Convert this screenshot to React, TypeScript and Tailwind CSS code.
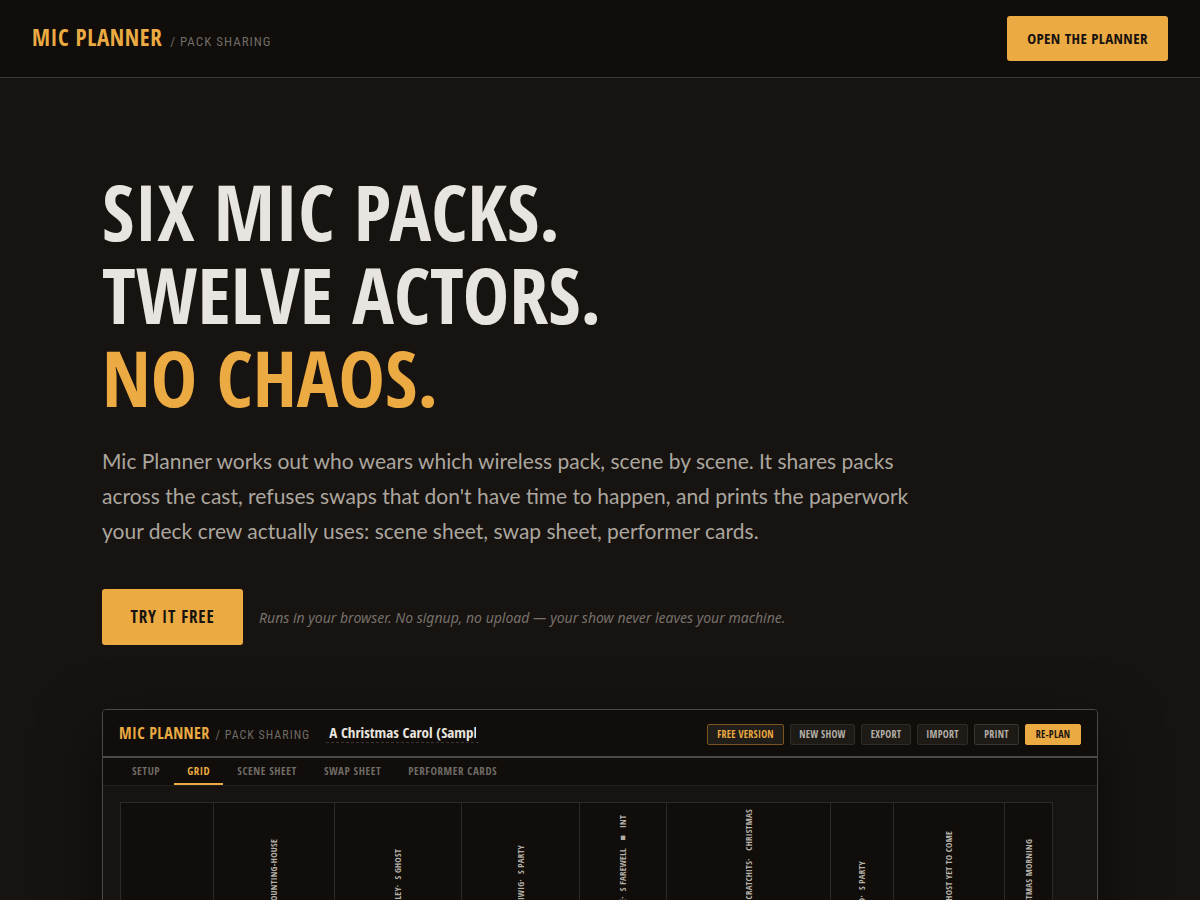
import React, { useState } from 'react';
import { clsx } from 'clsx';

const TABS = ['Setup', 'Grid', 'Scene sheet', 'Swap sheet', 'Performer cards'];

const ACTIONS = [
    { label: 'Free version', width: 'w-[77px]', style: 'border-[#7a5420] bg-[#211d19] text-[#ebaa42]' },
    { label: 'New show', width: 'w-[65px]', style: 'border-[#2f2b28] bg-[#1e1b17] text-[#b5b0a8]' },
    { label: 'Export', width: 'w-[50px]', style: 'border-[#2f2b28] bg-[#1e1b17] text-[#b5b0a8]' },
    { label: 'Import', width: 'w-[51px]', style: 'border-[#2f2b28] bg-[#1e1b17] text-[#b5b0a8]' },
    { label: 'Print', width: 'w-[45px]', style: 'border-[#3a3633] bg-[#1e1b17] text-[#b5b0a8]' },
    { label: 'Re-plan', width: 'w-[56px]', style: 'border-[#ebaa42] bg-[#ebaa42] text-[#171310]' },
];

// Scene names read bottom to top in the header row
const SCENES = [
    { name: 'Counting-House', col: 'w-[121px]', lead: 'pt-[36px]' },
    { name: 'Marley·\u00a0 S Ghost', col: 'w-[127px]', lead: 'pt-[46px]' },
    { name: 'Fezziwig·\u00a0 S Party', col: 'w-[118px]', lead: 'pt-[42px]' },
    { name: 'Belle·\u00a0 S Farewell\u00a0 ■\u00a0 Int', col: 'w-[87px]', lead: 'pt-[12px]' },
    { name: 'Cratchits·\u00a0\u00a0 Christmas', col: 'w-[164px]', lead: 'pt-[6px]' },
    { name: 'Fred·\u00a0 S Party', col: 'w-[63px]', lead: 'pt-[58px]' },
    { name: 'Ghost Yet To Come', col: 'w-[111px]', lead: 'pt-[28px]' },
    { name: 'Christmas Morning', col: 'w-[48px]', lead: 'pt-[36px]' },
];

const display = 'font-["Open_Sans_Condensed","Roboto_Condensed",sans-serif] font-bold uppercase';
const label = 'font-["Roboto_Condensed","Open_Sans_Condensed",sans-serif] uppercase';

function AppPreview() {
    const [tab, setTab] = useState('Grid');
    const [show, setShow] = useState('A Christmas Carol (Sample Show)');

    return (
        <section className="mt-16 overflow-hidden rounded border border-[#4d4946] bg-[#171310] shadow-[0_20px_60px_rgba(0,0,0,0.5)]">
            <div className="flex h-12 items-center border-b-2 border-[#4d4946] bg-[#100d0a] px-4">
                <div className="flex items-baseline gap-[6px]">
                    <span className={`${display} text-[16px] leading-6 tracking-wide text-[#ebaa42]`}>Mic Planner</span>
                    <span className={`${label} text-[12px] tracking-[1px] text-[#6f6b66]`}>/ Pack sharing</span>
                </div>
                <input
                    aria-label="Show name"
                    value={show}
                    onChange={e => setShow(e.target.value)}
                    className='ml-4 h-5 w-[153px] border-b border-dashed border-[#3a3633] px-[3px] font-["Open_Sans_Condensed","Roboto_Condensed",sans-serif] text-[15px] font-bold text-[#e8e4df] outline-none'
                />
                <div className="ml-auto flex gap-[6px] pt-0.5">
                    {ACTIONS.map(a => (
                        <button
                            key={a.label}
                            className={clsx(display, 'h-[21px] whitespace-nowrap rounded-xs border text-[10px] leading-none tracking-wide', a.width, a.style)}
                        >
                            {a.label}
                        </button>
                    ))}
                </div>
            </div>

            <nav className="flex h-7 gap-px border-b border-[#231f1c] bg-[#100d0a] px-4">
                {TABS.map(t => (
                    <button
                        key={t}
                        onClick={() => setTab(t)}
                        className={clsx(
                            display,
                            'border-b-2 px-[13px] text-[11px] leading-none tracking-wider',
                            tab === t ? 'border-[#ebaa42] text-[#ebaa42]' : 'border-transparent text-[#6f6b66]'
                        )}
                    >
                        {t}
                    </button>
                ))}
            </nav>

            <div className="px-[17px] pt-4">
                <table className="table-fixed border-collapse border border-[#3a3633] bg-[#100d0a]">
                    <thead>
                        <tr className="h-40 align-top">
                            <th className="w-[93px] border border-[#2d2926]" />
                            {SCENES.map(s => (
                                <th key={s.name} className={clsx('border border-[#2d2926] p-0', s.col, s.lead)}>
                                    <span className={`${display} inline-block rotate-180 whitespace-nowrap text-[9px] leading-3 tracking-wide text-[#b5b0a8] [writing-mode:vertical-rl]`}>
                                        {s.name}
                                    </span>
                                </th>
                            ))}
                        </tr>
                    </thead>
                </table>
            </div>
        </section>
    );
}

export default function App() {
    return (
        <div className="min-h-screen bg-[#171310] font-[Lato,sans-serif] text-[#e8e4df]">
            <header className="flex items-center justify-between border-b border-[#3a3633] bg-[#100d0a] px-8 py-4">
                <div className="flex items-baseline gap-2 pb-1">
                    <span className={`${display} text-[23px] leading-8 tracking-wide text-[#ebaa42]`}>Mic Planner</span>
                    <span className={`${label} text-[13px] tracking-[1px] text-[#6f6b66]`}>/ Pack sharing</span>
                </div>
                <a href="#planner" className={`${display} flex h-[45px] w-[161px] items-center justify-center rounded-[3px] bg-[#ebaa42] text-[15px] tracking-wide text-[#171310]`}>
                    Open the planner
                </a>
            </header>

            <main className="mx-auto max-w-[1060px] px-8 pt-[92px]">
                <h1 className={`${display} text-[78px] leading-[83px]`}>
                    Six mic packs.
                    <br />
                    Twelve actors.
                    <br />
                    <span className="text-[#ebaa42]">No chaos.</span>
                </h1>
                <p className="mt-6 max-w-[830px] text-[21px] leading-[35px] text-[#aba69f]">
                    Mic Planner works out who wears which wireless pack, scene by scene. It shares packs across the cast,
                    refuses swaps that don't have time to happen, and prints the paperwork your deck crew actually uses:
                    scene sheet, swap sheet, performer cards.
                </p>
                <div className="mt-[41px] flex items-center gap-4">
                    <a href="#try" className={`${display} flex h-14 w-[141px] items-center justify-center rounded-[3px] bg-[#ebaa42] text-[17px] tracking-wider text-[#171310]`}>
                        Try it free
                    </a>
                    <p className='font-["Noto_Sans",sans-serif] text-[14px] italic text-[#76716b]'>
                        Runs in your browser. No signup, no upload — your show never leaves your machine.
                    </p>
                </div>

                <AppPreview />
            </main>
        </div>
    );
}
